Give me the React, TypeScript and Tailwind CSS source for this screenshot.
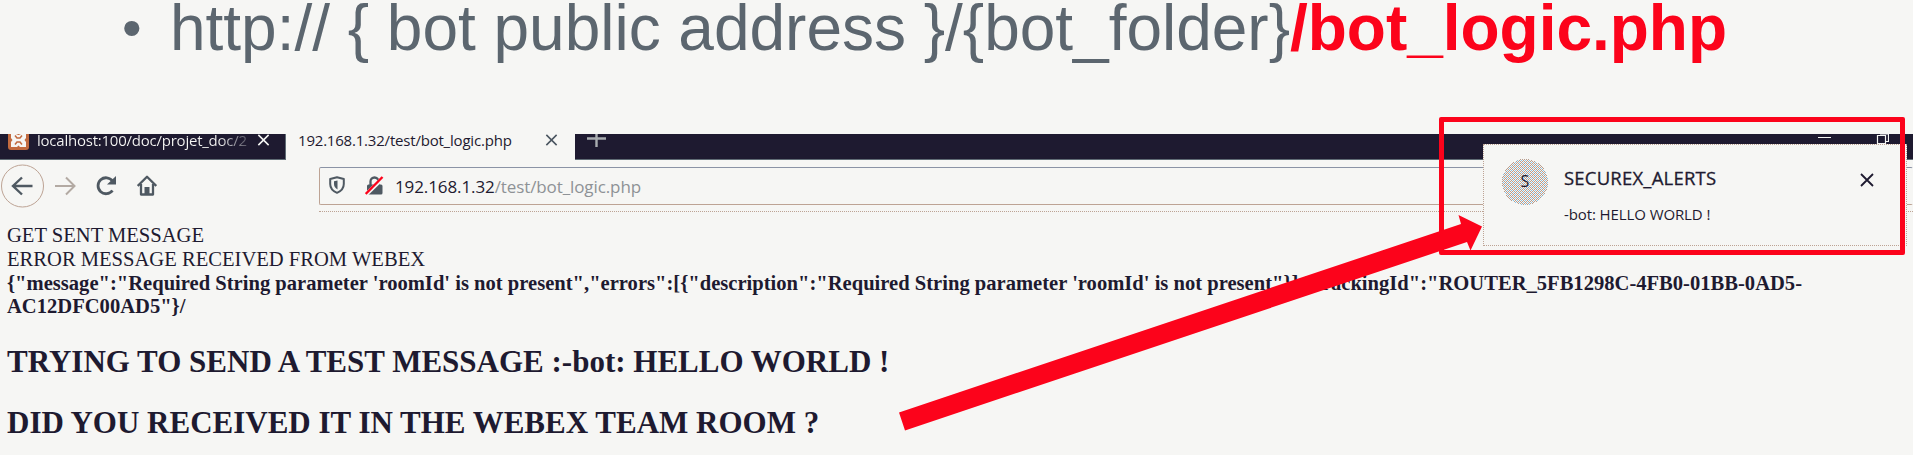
import React from "react";

const sans = "font-['Open_Sans','Noto_Sans',sans-serif]";

function Cross({ className }: { className: string }) {
  return (
    <svg viewBox="0 0 14 14" className={className} fill="none" stroke="currentColor" strokeWidth="1.8">
      <path d="M1 1l12 12M13 1L1 13" />
    </svg>
  );
}

function TabBar() {
  return (
    <div className="flex h-[26px] overflow-hidden text-[#1e1a30]">
      <div className="flex w-[286px] shrink-0 items-start border-b border-r border-[#5f6b74] bg-[#1e1a30] pl-2 text-[#f6f6f4]">
        <svg viewBox="0 0 21 16" className="h-4 w-[21px] shrink-0">
          <path d="M0 0h21v13q0 3-3 3H3q-3 0-3-3z" fill="#c26a3f" />
          <path d="M3 0h5l2.500 1L13 0h5v4l-1.500 2L18 8v5h-6l-1.500-1.500L9 13H3V8l1.500-2L3 4z" fill="#f6f6f4" />
          <path d="M7 1.500l2 2.500h3l2-2.500M7 10.500L9 8h3l2 2.500" fill="none" stroke="#c26a3f" strokeWidth="1.500" />
        </svg>
        <div className={`${sans} ml-2 w-[213px] shrink-0 overflow-hidden whitespace-nowrap bg-linear-to-r from-[#f6f6f4] from-85% to-[#4a4858] bg-clip-text text-[15px] leading-[24px] tracking-[-0.23px] -mt-[6px] text-transparent`}>
          localhost:100/doc/projet_doc/2
        </div>
        <Cross className="mt-0 ml-[7px] h-3 w-[13px] shrink-0" />
      </div>
      <div className="flex w-[289px] shrink-0 items-start pl-3">
        <div className={`${sans} w-[247px] shrink-0 whitespace-nowrap text-[15px] leading-[24px] tracking-[-0.2px] -mt-[6px]`}>192.168.1.32/test/bot_logic.php</div>
        <Cross className="h-3 w-[13px] shrink-0 text-[#4a5560]" />
      </div>
      <div className="flex min-w-0 grow justify-between border-b border-[#5f6b74] bg-[#1e1a30]">
        <svg viewBox="0 0 20 14" className="ml-3 h-[14px] w-5" stroke="#a9adb0" strokeWidth="2.400">
          <path d="M0 4.500h19M9.500 0v13" />
        </svg>
        <div className="mr-6 flex h-[11px]">
          <svg viewBox="0 0 71 11" className="h-[11px] w-[71px]" fill="none" stroke="#f6f6f4">
            <path d="M0 3.500h13" />
            <path d="M59.500 1.500h8v8h-8zM62 0h8.500v7.500H68" strokeWidth="1.200" />
          </svg>
        </div>
      </div>
    </div>
  );
}

function NavBar() {
  return (
    <div className="flex h-[52px] items-start text-[#4f5962]">
      <svg viewBox="0 0 44 44" className="mt-1 ml-px h-11 w-11 shrink-0" fill="none">
        <circle cx="21.500" cy="22" r="21" stroke="#bda394" />
        <path d="M31.500 22H12.500M21 13.500L12 22l9 8.500" stroke="currentColor" strokeWidth="2.400" />
      </svg>
      <svg viewBox="0 0 21 20" className="mt-4 ml-[10px] h-5 w-[21px] shrink-0" fill="none" stroke="#b3aaa3" strokeWidth="2">
        <path d="M0 10h19M11 1.500L19.500 10 11 18.500" />
      </svg>
      <svg viewBox="0 0 20 20" className="mt-4 ml-5 h-5 w-5 shrink-0" fill="none" stroke="currentColor" strokeWidth="2.800">
        <path d="M16.500 14.500A8 8 0 1 1 16.500 5" />
        <path d="M20 0v8.500h-9z" fill="currentColor" stroke="none" />
      </svg>
      <svg viewBox="0 0 20 21" className="mt-[15px] ml-[21px] h-[21px] w-5 shrink-0" fill="none" stroke="currentColor" strokeWidth="2.300">
        <path d="M.7 11L10 1.700 19.300 11M4 9v10.500h12V9" strokeLinejoin="round" />
        <path d="M7.500 20v-8h5v8z" fill="currentColor" stroke="none" />
      </svg>
      <div className="ml-[162px] flex h-[52px] grow flex-col border-b border-dotted border-[#bda394]">
        <div className="mt-[7px] flex h-[38px] items-start rounded-[2px] border border-t-[#8b93a5] border-r-transparent border-b-[#bda394] border-l-[#bda394]">
          <svg viewBox="0 0 16 18" className="mt-2 ml-[9px] h-[18px] w-4 shrink-0" fill="none" stroke="currentColor">
            <path d="M8 1.200L14.800 3v5c0 4-2.500 7-6.800 8.800C3.700 15 1.200 12 1.200 8V3z" strokeWidth="2" strokeLinejoin="round" />
            <path d="M8.500 4.500v9C6 12 5 10 5 8V5.300z" fill="currentColor" stroke="none" />
          </svg>
          <svg viewBox="0 0 19 20" className="mt-2 ml-5 h-5 w-[19px] shrink-0" fill="none">
            <path d="M5.500 9V5.500a4 4 0 0 1 8 0V9" stroke="#4f5962" strokeWidth="2.300" />
            <rect x="2" y="8.500" width="15.500" height="10" rx="1.500" fill="#4f5962" />
            <path d="M0 19.500L18 2" stroke="#f6f6f4" strokeWidth="4" />
            <path d="M.7 18L17.500 1" stroke="#fc031b" strokeWidth="2.400" />
          </svg>
          <div className={`${sans} mt-[6px] ml-[11px] whitespace-nowrap text-[17px] leading-[26px] tracking-[-0.1px] text-[#8e9296]`}>
            <span className="text-[#1e1a30]">192.168.1.32</span>/test/bot_logic.php
          </div>
        </div>
      </div>
    </div>
  );
}

function Notification() {
  return (
    <div className="absolute top-[144px] left-[1483px] flex h-[102px] w-[424px] items-start border border-dotted border-[#bda394] bg-[#f6f6f4] text-[#1e1a30]">
      <div className="relative mt-[14px] ml-[18px] h-[46px] w-[46px] shrink-0">
        <svg viewBox="0 0 46 46" className="h-[46px] w-[46px]" shapeRendering="crispEdges">
          <defs>
            <pattern id="weave" width="4" height="4" patternUnits="userSpaceOnUse">
              <rect width="4" height="4" fill="#f6f6f4" />
              <path d="M0 0h1v1H0zM2 0h1v1H2zM1 1h1v1H1zM0 2h1v1H0zM2 2h1v1H2zM3 3h1v1H3z" fill="#b89c8c" />
              <path d="M3 1h1v1H3zM1 3h1v1H1z" fill="#86c8ee" />
            </pattern>
          </defs>
          <circle cx="23" cy="23" r="23" fill="url(#weave)" />
        </svg>
        <span className={`${sans} absolute inset-0 text-center text-[16px] leading-[45px] font-medium`}>S</span>
      </div>
      <div className={`${sans} ml-4 w-[296px] shrink-0 whitespace-nowrap`}>
        <div className="mt-[19px] text-[18.500px] leading-[28px] font-medium tracking-[0.2px] [-webkit-text-stroke:0.3px_#1e1a30]">SECUREX_ALERTS</div>
        <div className="mt-[10px] text-[15px] leading-[24px] tracking-[-0.1px]">-bot: HELLO WORLD !</div>
      </div>
      <Cross className="mt-7 h-[14px] w-[14px] shrink-0" />
    </div>
  );
}

export default function App() {
  return (
    <div className="relative h-[455px] w-[1913px] overflow-hidden bg-[#f6f6f4]">
      <div className="flex h-[134px] items-start pl-[122px] font-['Liberation_Sans',sans-serif] text-[64px] leading-[72px] whitespace-nowrap text-[#5c666f]">
        <span className="-mt-[8px] w-[48px] shrink-0 text-[56px]">•</span>
        <span className="-mt-[8px] tracking-[-0.02px]">
          http:// {"{"} bot public address {"}"}/{"{"}bot_folder{"}"}
          <b className="text-[#fc031b]">/bot_logic.php</b>
        </span>
      </div>
      <TabBar />
      <NavBar />
      <div className="pt-[12px] pl-[7px] font-['Liberation_Serif',serif] text-[20.580px] leading-[23.800px] whitespace-nowrap text-[#1e1a30]">
        <p>GET SENT MESSAGE</p>
        <p>ERROR MESSAGE RECEIVED FROM WEBEX</p>
        <p className="font-bold">{`{"message":"Required String parameter 'roomId' is not present","errors":[{"description":"Required String parameter 'roomId' is not present"}],"trackingId":"ROUTER_5FB1298C-4FB0-01BB-0AD5-`}</p>
        <p className="font-bold">{`AC12DFC00AD5"}/`}</p>
        <h2 className="mt-[25px] text-[31px] leading-[36px] font-bold">TRYING TO SEND A TEST MESSAGE :-bot: HELLO WORLD !</h2>
        <h2 className="mt-[25px] text-[31px] leading-[36px] font-bold">DID YOU RECEIVED IT IN THE WEBEX TEAM ROOM ?</h2>
      </div>
      <Notification />
      <div className="absolute top-[117px] left-[1439px] h-[138px] w-[466px] rounded-[2px] border-[5px] border-[#fc031b]" />
      <svg viewBox="0 0 584 216" className="absolute top-[215px] left-[899px] h-[216px] w-[584px]">
        <path d="M0 197.500L562 9l-2.500-9L583 11.500 571.500 35.500l-3.500-8.500L6 215.500z" fill="#fc031b" />
      </svg>
    </div>
  );
}
